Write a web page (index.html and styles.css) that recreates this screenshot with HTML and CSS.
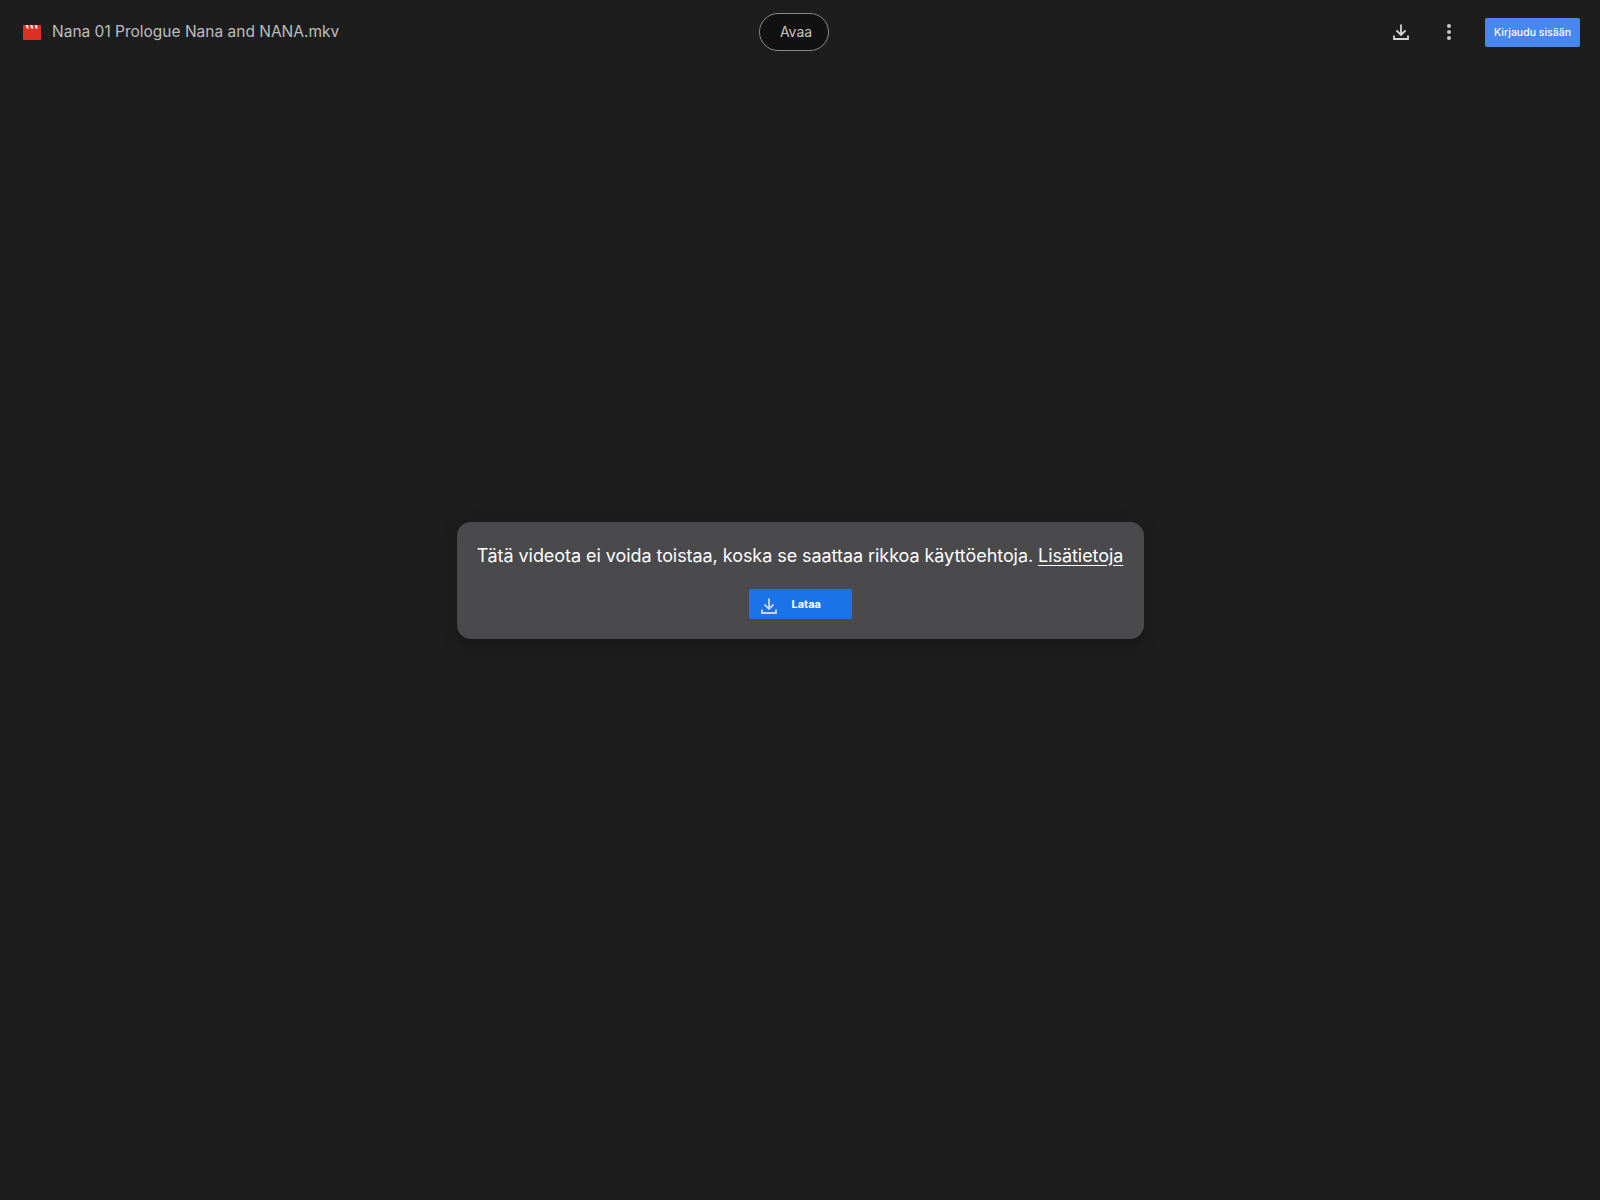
FILE: index.html
```html
<!DOCTYPE html>
<html lang="fi">
<head>
<meta charset="utf-8">
<title>Nana 01 Prologue Nana and NANA.mkv</title>
<link rel="stylesheet" href="styles.css">
</head>
<body>
<header class="topbar">
  <div class="file">
    <svg class="file-icon" viewBox="0 0 18 15" aria-hidden="true">
      <path fill="#dd3025" d="M1 0h16a1 1 0 0 1 1 1v13a1 1 0 0 1-1 1H1a1 1 0 0 1-1-1V1a1 1 0 0 1 1-1z"/>
      <path fill="#f9dedb" d="M2.500 0h2.500l1 3.500H3.500zM7 0h2.500l1 3.500H8zM11.500 0H14l1 3.500h-2.500z"/>
    </svg>
    <span class="file-name">Nana 01 Prologue Nana and NANA.mkv</span>
  </div>
  <button class="open-btn">Avaa</button>
  <div class="actions">
    <svg class="icon-download" viewBox="0 0 16 16" aria-hidden="true">
      <path d="M8 0.500v10M3.500 6.500L8 11l4.500-4.500M1 11.500v3.500h14v-3.500" fill="none" stroke="#d4d4d4" stroke-width="1.800"/>
    </svg>
    <svg class="icon-more" viewBox="0 0 4 16" aria-hidden="true">
      <circle cx="2" cy="2" r="2" fill="#c8c8c8"/><circle cx="2" cy="8" r="2" fill="#c8c8c8"/><circle cx="2" cy="14" r="2" fill="#c8c8c8"/>
    </svg>
    <button class="signin">Kirjaudu sisään</button>
  </div>
</header>
<main class="stage">
  <section class="notice">
    <p class="notice-text">Tätä videota ei voida toistaa, koska se saattaa rikkoa käyttöehtoja. <a href="#" class="notice-link">Lisätietoja</a></p>
    <button class="download-btn">
      <svg class="icon-download-small" viewBox="0 0 16 16" aria-hidden="true">
        <path d="M8 0.500v10M3.500 6.500L8 11l4.500-4.500M1 11.500v3.500h14v-3.500" fill="none" stroke="#cfd4dc" stroke-width="1.800"/>
      </svg>
      <span>Lataa</span>
    </button>
  </section>
</main>
</body>
</html>
```

FILE: styles.css
```css
* { box-sizing: border-box; }
html, body { margin: 0; height: 100%; }
body {
  background: #1d1d1d;
  font-family: "Inter", "Noto Sans", sans-serif;
  overflow: hidden;
}
button { font-family: inherit; cursor: pointer; }
.topbar {
  height: 64px;
  display: flex;
  align-items: center;
  padding: 0 20px 0 23px;
}
.file {
  width: 736px;
  display: flex;
  align-items: center;
  gap: 11px;
}
.file-icon { width: 18px; height: 15px; flex: none; }
.file-name { font-size: 15.500px; color: #bdbdbd; white-space: nowrap; margin-top: -2px; }
.open-btn {
  width: 70px;
  height: 38px;
  border: 1px solid #8a8a8a;
  border-radius: 19px;
  background: #111;
  color: #c4c4c4;
  font-size: 14px;
  padding: 0 0 1px 4px;
}
.actions {
  margin-left: auto;
  display: flex;
  align-items: center;
}
.icon-download { width: 16px; height: 16px; margin-top: -1px; }
.icon-more { width: 4px; height: 16px; margin-left: 38px; margin-top: -1px; }
.signin {
  margin-left: 34px;
  width: 95px;
  height: 29px;
  border: 0;
  border-radius: 2px;
  background: #4787f0;
  color: #fff;
  font-size: 10.500px;
  font-weight: 500;
  padding: 0;
}
.stage {
  display: flex;
  justify-content: center;
  padding-top: 458px;
}
.notice {
  width: 687px;
  height: 117px;
  padding-top: 21px;
  background: #4a494b;
  border-radius: 14px;
  box-shadow: 0 4px 16px rgba(0, 0, 0, .25);
  display: flex;
  flex-direction: column;
  align-items: center;
}
.notice-text {
  margin: 0;
  font-size: 18px;
  letter-spacing: -0.060px;
  line-height: 25px;
  color: #fff;
  white-space: nowrap;
}
.notice-link { color: #fff; text-decoration: underline; text-underline-offset: 3px; }
.download-btn {
  margin-top: 21px;
  width: 103px;
  height: 30px;
  border: 0;
  border-radius: 2px;
  background: #1a73e8;
  color: #fff;
  font-size: 11px;
  font-weight: 700;
  display: flex;
  align-items: center;
  padding: 0 0 0 12px;
  gap: 15px;
}
.icon-download-small { width: 16px; height: 16px; margin-top: 3px; }
```
